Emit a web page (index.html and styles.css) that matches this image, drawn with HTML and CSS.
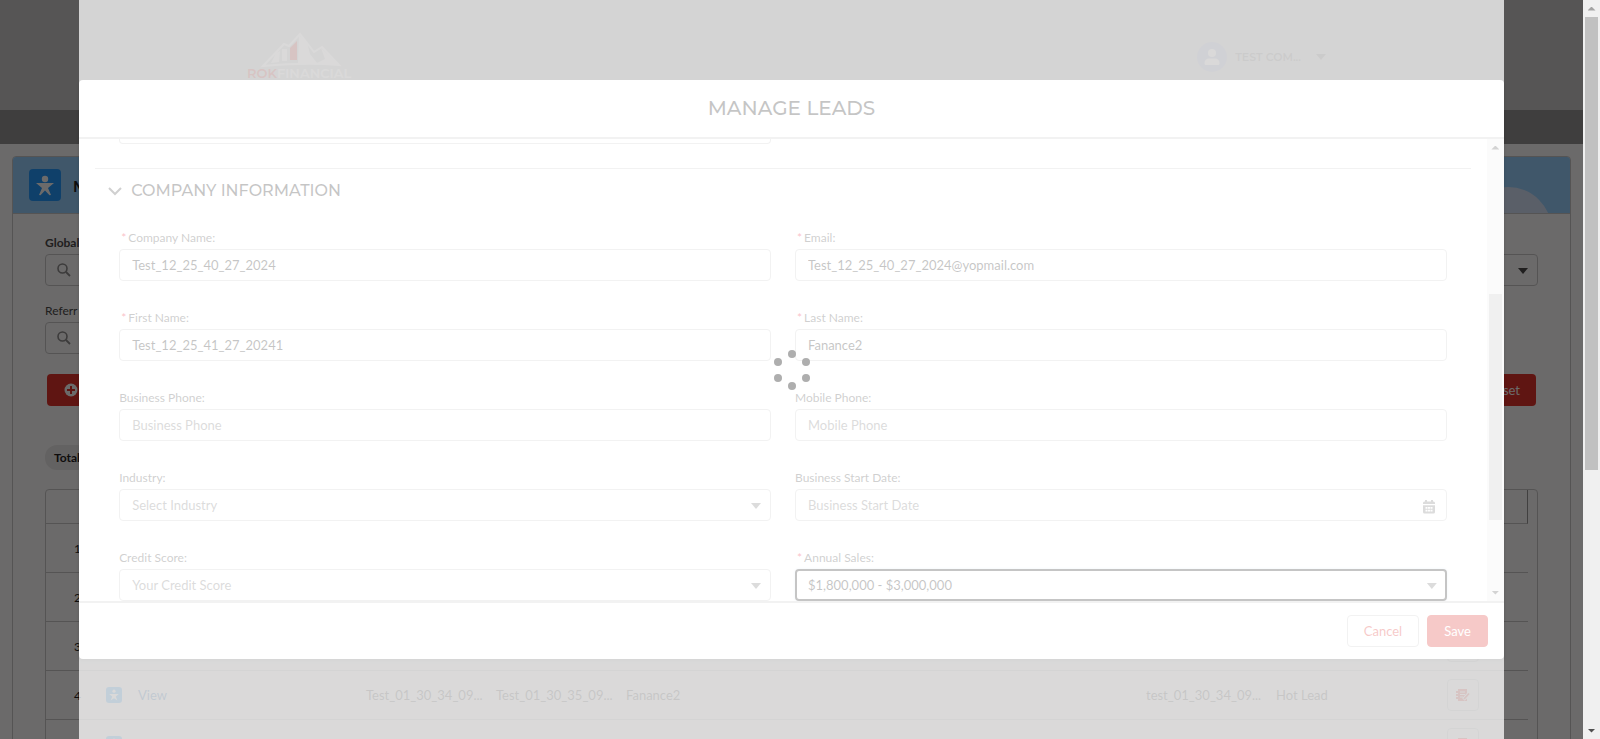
FILE: index.html
```html
<!DOCTYPE html>
<html lang="en">
<head>
<meta charset="utf-8">
<title>Manage Leads</title>
<link rel="stylesheet" href="styles.css">
</head>
<body>
<svg class="defs" aria-hidden="true">
  <symbol id="i-view" viewBox="0 0 16 16"><rect width="16" height="16" rx="3" fill="#1b96ff"/><circle cx="8" cy="4.200" r="1.600" fill="#fff"/><path d="M3.200 7h9.600L9.800 9.500l1.500 4L8 11.300l-3.300 2.200 1.500-4z" fill="#fff"/></symbol>
  <symbol id="i-edit" viewBox="0 0 14 14"><path d="M2 1h9v12H2zM0 3h3v2H0zM0 6h3v2H0zM0 9h3v2H0z" fill="#e22c24"/><path d="M4 4h5M4 6.500h5M4 9h3" stroke="#fff"/><path d="M7.500 11.500L13 5.500" stroke="#fff" stroke-width="3.500"/><path d="M8 11L13 5.500" stroke="#e22c24" stroke-width="1.800"/></symbol>
  <symbol id="i-glass" viewBox="0 0 14 14"><circle cx="5.500" cy="5.500" r="4.500" fill="none" stroke="#8a8a8a" stroke-width="1.600"/><path d="M9 9l4 4" stroke="#8a8a8a" stroke-width="1.800"/></symbol>
</svg>
<div class="window">
  <div class="viewport">
    <div class="page">
      <header class="site-header">
        <svg class="logo" viewBox="0 0 108 48" role="img" aria-label="ROK Financial">
          <path d="M16 34 L37 12 L42 14 L53 2 L67 20 L75 15 L92 33 Q60 30 16 34Z" fill="none" stroke="#fff" stroke-width="2"/>
          <path d="M52 3 L51 31 L92 33 L74 16 L78 27 L70 31 L63 22 L60 10Z" fill="#fff"/>
          <path d="M35 17 L40 17 L40 29 L35 29ZM29 21 L33 19 L32 30 L24 31Z" fill="#fff"/>
          <path d="M43 16 L50 9 L50 28 L43 28Z" fill="#e22c24"/>
          <text class="logo-text" x="0" y="46"><tspan fill="#e22c24">ROK</tspan><tspan fill="#fff">FINANCIAL</tspan></text>
        </svg>
        <div class="user">
          <svg class="avatar" viewBox="0 0 30 30"><circle cx="15" cy="15" r="15" fill="#a3abd0"/><circle cx="15" cy="11" r="4" fill="#fff"/><path d="M7.500 21c0-3 2-4.500 4.500-4.500h6c2.500 0 4.500 1.500 4.500 4.500 0 1.500-.5 2-1.500 2h-12c-1 0-1.500-.5-1.500-2z" fill="#fff"/></svg>
          <span class="user-name">TEST COM...</span>
          <span class="caret"></span>
        </div>
      </header>
      <nav class="site-nav"></nav>
      <main class="card">
        <div class="card-head">
          <span class="tile"><svg viewBox="0 0 32 32"><circle cx="16" cy="10" r="3.200" fill="#fff"/><path d="M7 14h18l-6 5 3 7-1.500.3L16 21.500 11.500 26.300 10 26l3-7z" fill="#fff"/></svg></span>
          <h1 class="card-title">M</h1>
          <span class="dome"></span>
        </div>
        <div class="card-body">
          <div class="filters">
            <div class="filter">
              <label class="filter-label strong" for="global">Global</label>
              <div class="control"><svg class="glass"><use href="#i-glass"/></svg><input class="box" id="global" type="text"></div>
            </div>
            <div class="filter">
              <span class="filter-label"></span>
              <div class="control"><select class="box" aria-label="Status"><option></option></select><span class="caret dark"></span></div>
            </div>
            <div class="filter">
              <label class="filter-label" for="referral">Referr</label>
              <div class="control"><svg class="glass"><use href="#i-glass"/></svg><input class="box" id="referral" type="text"></div>
            </div>
          </div>
          <div class="actions">
            <button class="red" type="button" aria-label="Add"><svg class="plus" viewBox="0 0 14 14"><circle cx="7" cy="7" r="6.500" fill="#fff"/><path d="M7 3v8M3 7h8" stroke="#e22c24" stroke-width="2"/></svg></button>
            <button class="red" type="button">Reset</button>
          </div>
          <div class="totals"><span class="pill">Total</span></div>
          <div class="table-box">
            <table class="leads">
              <colgroup><col class="c-num"><col class="c-view"><col span="9"></colgroup>
              <thead><tr><th colspan="11"></th></tr></thead>
              <tbody>
                <tr><td class="num">1</td><td colspan="10"></td></tr>
                <tr><td class="num">2</td><td colspan="10"></td></tr>
                <tr><td class="num">3</td><td colspan="9"></td><td class="act"><button class="edit" type="button" aria-label="Edit lead 3"></button></td></tr>
                <tr><td class="num">4</td><td><a class="view" href="#"><svg><use href="#i-view"/></svg>View</a></td><td>Test_01_30_34_09...</td><td>Test_01_30_35_09...</td><td>Fanance2</td><td></td><td></td><td></td><td>test_01_30_34_09...</td><td>Hot Lead</td><td class="act"><button class="edit" type="button" aria-label="Edit lead 4"><svg><use href="#i-edit"/></svg></button></td></tr>
                <tr><td class="num"></td><td><a class="view" href="#"><svg><use href="#i-view"/></svg>View</a></td><td>Test_02_47_34_08...</td><td>Test_02_47_33_08...</td><td>Fanance2</td><td></td><td></td><td></td><td>test_02_47_33_08...</td><td>Hot Lead</td><td class="act"><button class="edit" type="button" aria-label="Edit lead 5"><svg><use href="#i-edit"/></svg></button></td></tr>
              </tbody>
            </table>
          </div>
        </div>
      </main>
    </div>
    <div class="backdrop"></div>
    <div class="modal-layer">
      <section class="modal" role="dialog" aria-labelledby="modal-title">
        <header class="modal-head"><h2 class="modal-title" id="modal-title">MANAGE LEADS</h2></header>
        <div class="modal-main">
          <form class="modal-scroll">
            <div class="tail"></div>
            <h3 class="section-title"><svg class="chevron" viewBox="0 0 14 14"><path d="M1 4l6 6 6-6"/></svg>COMPANY INFORMATION</h3>
            <div class="fields">
              <div class="field"><label for="company"><abbr>*</abbr>Company Name:</label><div class="control"><input class="box" id="company" type="text" value="Test_12_25_40_27_2024"></div></div>
              <div class="field"><label for="email"><abbr>*</abbr>Email:</label><div class="control"><input class="box" id="email" type="text" value="Test_12_25_40_27_2024@yopmail.com"></div></div>
              <div class="field"><label for="first"><abbr>*</abbr>First Name:</label><div class="control"><input class="box" id="first" type="text" value="Test_12_25_41_27_20241"></div></div>
              <div class="field"><label for="last"><abbr>*</abbr>Last Name:</label><div class="control"><input class="box" id="last" type="text" value="Fanance2"></div></div>
              <div class="field"><label for="bphone">Business Phone:</label><div class="control"><input class="box" id="bphone" type="text" placeholder="Business Phone"></div></div>
              <div class="field"><label for="mphone">Mobile Phone:</label><div class="control"><input class="box" id="mphone" type="text" placeholder="Mobile Phone"></div></div>
              <div class="field"><label for="industry">Industry:</label><div class="control"><select class="box muted" id="industry"><option>Select Industry</option></select><span class="caret"></span></div></div>
              <div class="field"><label for="start">Business Start Date:</label><div class="control"><input class="box" id="start" type="text" placeholder="Business Start Date"><svg class="calendar" viewBox="0 0 12 14"><path d="M0 4V3q0-1.500 1.500-1.500H2V0h2v1.500h4V0h2v1.500h.5Q12 1.500 12 3v1zM0 5.200h12V12q0 1.500-1.500 1.500h-9Q0 13.500 0 12z" fill="#747474"/><path d="M2.500 7h2v1.800h-2zM5 7h2v1.800H5zM7.500 7h2v1.800h-2zM2.500 9.800h2v1.800h-2zM5 9.800h2v1.800H5zM7.500 9.800h2v1.800h-2z" fill="#fff"/></svg></div></div>
              <div class="field"><label for="credit">Credit Score:</label><div class="control"><select class="box muted" id="credit"><option>Your Credit Score</option></select><span class="caret"></span></div></div>
              <div class="field"><label for="sales"><abbr>*</abbr>Annual Sales:</label><div class="control"><select class="box active" id="sales"><option>$1,800,000 - $3,000,000</option></select><span class="caret"></span></div></div>
            </div>
          </form>
          <div class="scrollbar inner"><span class="arrow up"></span><span class="track before"></span><span class="thumb"></span><span class="track after"></span><span class="arrow down"></span></div>
        </div>
        <footer class="modal-foot">
          <button class="btn" type="button">Cancel</button>
          <button class="btn primary" type="button">Save</button>
        </footer>
      </section>
      <div class="spinner">
        <svg viewBox="0 0 40 42"><g fill="#aeaeae"><circle cx="20" cy="5" r="4"/><circle cx="6" cy="13" r="4"/><circle cx="34" cy="13" r="4"/><circle cx="6" cy="29" r="4"/><circle cx="34" cy="29" r="4"/><circle cx="20" cy="37" r="4"/></g></svg>
      </div>
    </div>
  </div>
  <div class="scrollbar outer"><span class="arrow up"></span><span class="thumb"></span><span class="track after"></span><span class="arrow down"></span></div>
</div>
</body>
</html>
```

FILE: styles.css
```css
* { box-sizing: border-box; }

body {
  margin: 0;
  font-family: Lato, "Open Sans", sans-serif;
  font-size: 13px;
  color: #181818;
}

h1, h2, h3 { margin: 0; font-weight: 500; }
button, input, select { font: inherit; }
.defs { display: none; }

.window {
  display: grid;
  grid-template-columns: minmax(0, 1fr) 17px;
  height: 100vh;
  overflow: hidden;
}

.viewport { position: relative; overflow: hidden; height: 100vh; }

/* Page behind the dialog */
.page { height: 100%; overflow: hidden; background: #fff; }

.site-header {
  display: flex;
  justify-content: space-between;
  align-items: flex-start;
  height: 110px;
  padding: 32px 257px 0 247px;
  background: #cacaca;
}
.logo { width: 108px; height: 48px; }
.logo-text { font-family: Montserrat, Inter, sans-serif; font-size: 13px; font-weight: 600; }
.user { display: flex; align-items: center; gap: 8px; padding-top: 10px; }
.avatar { width: 30px; height: 30px; }
.user-name { font-family: Montserrat, Inter, sans-serif; font-size: 11px; font-weight: 600; color: #747474; }
.user .caret { margin-left: 7px; }

.site-nav { height: 34px; background: #929292; }

.card {
  margin: 12px 12px 0;
  border: 1px solid #c9c9c9;
  border-radius: 4px;
  height: 640px;
}
.card-head {
  position: relative;
  overflow: hidden;
  display: flex;
  align-items: center;
  gap: 12px;
  height: 57px;
  padding: 0 16px;
  background: #94cfff;
  border-bottom: 1px solid #c9c9c9;
  border-radius: 3px 3px 0 0;
}
.tile { width: 32px; height: 32px; border-radius: 4px; background: #1b96ff; }
.tile svg { display: block; }
.card-title { font-size: 16px; font-weight: 700; }
.dome {
  position: absolute;
  top: 30px;
  right: 18px;
  width: 88px;
  height: 88px;
  border-radius: 50%;
  background: #d5e4fa;
}

.card-body { padding: 20px 32px; }
.filters { display: grid; grid-template-columns: 1fr 1fr; gap: 16px 24px; }
.filter-label { display: block; height: 20px; font-size: 12px; line-height: 18px; color: #444; }
.filter-label.strong { font-weight: 700; }

.control { position: relative; height: 32px; }
.box {
  display: block;
  width: 100%;
  height: 32px;
  margin: 0;
  padding: 0 12px;
  border: 1px solid #c9c9c9;
  border-radius: 4px;
  background: transparent;
  color: #181818;
  appearance: none;
  outline: none;
}
.box::placeholder { color: #747474; opacity: 1; }
.box.muted { color: #747474; }
.box.active { border: 2px solid #181818; padding: 0 11px; box-shadow: 0 0 3px #c5d9ec; }

.caret {
  width: 10px;
  height: 6px;
  background: #747474;
  clip-path: polygon(0 0, 100% 0, 50% 100%);
}
.caret.dark { background: #444; }
.control .caret { position: absolute; right: 10px; top: 14px; }
.glass { position: absolute; left: 12px; top: 9px; width: 14px; height: 14px; }
.calendar { position: absolute; right: 12px; top: 11px; width: 12px; height: 14px; }

.actions { display: flex; justify-content: space-between; padding: 20px 2px 0; }
.red {
  display: flex;
  align-items: center;
  height: 32px;
  padding: 0 16px;
  border: 0;
  border-radius: 4px;
  background: #e22c24;
  color: #fff;
}
.plus { width: 14px; height: 14px; margin: 0 20px 0 1px; }
.totals { display: flex; padding-top: 39px; }
.pill {
  height: 25px;
  padding: 0 9px;
  border-radius: 12px;
  background: #ecebea;
  font-size: 12px;
  font-weight: 700;
  line-height: 25px;
}

.table-box {
  margin-top: 19px;
  padding-right: 9px;
  border: 1px solid #c9c9c9;
  border-radius: 4px;
}
.leads { width: 100%; table-layout: fixed; border-collapse: separate; border-spacing: 0; }
.c-num { width: 52px; }
.c-view { width: 260px; }
.leads th { height: 34px; padding: 0; border-right: 1px solid #969696; border-bottom: 1px solid #c9c9c9; }
.leads td { height: 49px; padding: 0 8px; border-bottom: 1px solid #c9c9c9; white-space: nowrap; color: #444; }
.leads .num { padding-right: 17px; font-size: 12px; text-align: right; color: #181818; }
.leads .act { text-align: center; }
.view { display: flex; align-items: center; gap: 16px; color: #0b5cab; text-decoration: none; }
.view svg { width: 16px; height: 16px; }
.edit {
  display: inline-flex;
  align-items: center;
  justify-content: center;
  width: 32px;
  height: 32px;
  padding: 0;
  border: 1px solid #c9c9c9;
  border-radius: 4px;
  background: transparent;
  vertical-align: middle;
}
.edit svg { width: 14px; height: 14px; }

/* Dialog */
.backdrop { position: absolute; inset: 0; background: rgba(8, 7, 7, 0.6); }
.modal-layer {
  position: absolute;
  inset: 0 5%;
  display: flex;
  padding: 80px 0;
}
.modal {
  flex: 1;
  min-width: 0;
  display: flex;
  flex-direction: column;
  border-radius: 4px;
  background: #fff;
  box-shadow: 0 2px 3px rgba(0, 0, 0, 0.16);
}
.modal-head { height: 59px; border-bottom: 2px solid #c9c9c9; text-align: center; }
.modal-title { font-family: Montserrat, Inter, sans-serif; font-size: 20px; font-weight: 500; line-height: 56px; }
.modal-main { flex: 1; min-height: 0; display: flex; }
.modal-scroll { flex: 1; min-width: 0; overflow: hidden; padding: 0 16px; }
.tail {
  width: calc(50% - 36px);
  height: 5px;
  margin-left: 24px;
  border: 1px solid #c9c9c9;
  border-top: 0;
  border-radius: 0 0 4px 4px;
}
.section-title {
  display: flex;
  align-items: center;
  gap: 9px;
  height: 44px;
  margin-top: 24px;
  padding-left: 13px;
  border-top: 1px solid #c9c9c9;
  font-family: Montserrat, Inter, sans-serif;
  font-size: 16px;
}
.chevron { width: 14px; height: 14px; fill: none; stroke: #444; stroke-width: 2; }
.fields {
  display: grid;
  grid-template-columns: 1fr 1fr;
  gap: 28px 24px;
  padding: 17px 24px 0;
}
.field label { display: block; height: 20px; font-size: 12px; line-height: 18px; color: #444; }
.field abbr { margin: 0 2px; color: #ea001e; }

.modal-foot {
  display: flex;
  justify-content: flex-end;
  gap: 8px;
  padding: 12px 16px;
  border-top: 2px solid #c9c9c9;
}
.btn {
  height: 32px;
  padding: 0 16px;
  border: 1px solid #c9c9c9;
  border-radius: 4px;
  background: #fff;
  color: #db2b26;
}
.btn.primary { border-color: #db2b26; background: #db2b26; color: #fff; }

.spinner {
  position: absolute;
  inset: 0;
  display: flex;
  align-items: center;
  justify-content: center;
  background: rgba(255, 255, 255, 0.75);
}
.spinner svg { width: 40px; height: 42px; }

/* Scrollbars */
.scrollbar { width: 17px; display: flex; flex-direction: column; align-items: center; background: #f0f0f0; }
.arrow { flex: none; display: flex; align-items: center; justify-content: center; width: 17px; height: 17px; }
.arrow::before { content: ""; width: 8px; height: 4px; background: #a3a3a3; }
.arrow.up::before { clip-path: polygon(50% 0, 100% 100%, 0 100%); }
.arrow.down::before { clip-path: polygon(0 0, 100% 0, 50% 100%); background: #505050; }
.thumb { width: 13px; background: #c1c1c1; }
.outer .thumb { flex: 453; }
.outer .after { flex: 252; }
.inner .arrow::before { background: #505050; }
.inner .before { flex: 138; }
.inner .thumb { flex: 226; }
.inner .after { flex: 64; }
```
